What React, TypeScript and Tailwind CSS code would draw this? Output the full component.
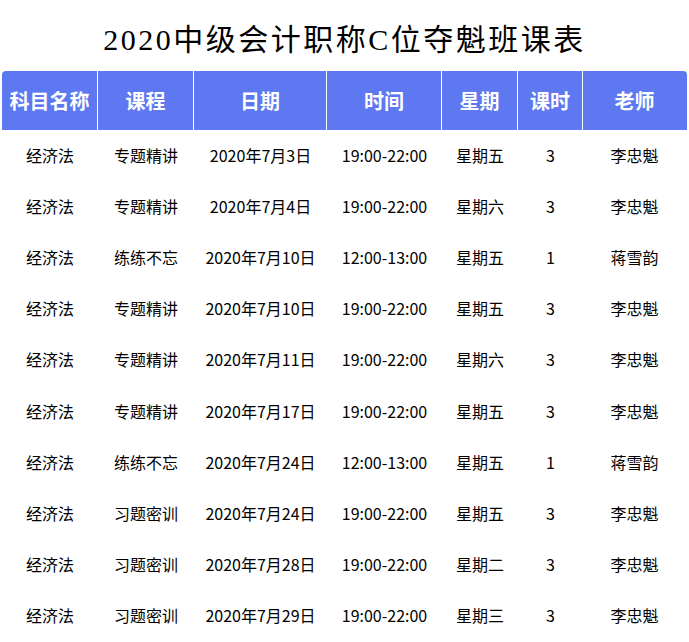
import React from "react";

const rows: string[][] = [
  ["经济法", "专题精讲", "2020年7月3日", "19:00-22:00", "星期五", "3", "李忠魁"],
  ["经济法", "专题精讲", "2020年7月4日", "19:00-22:00", "星期六", "3", "李忠魁"],
  ["经济法", "练练不忘", "2020年7月10日", "12:00-13:00", "星期五", "1", "蒋雪韵"],
  ["经济法", "专题精讲", "2020年7月10日", "19:00-22:00", "星期五", "3", "李忠魁"],
  ["经济法", "专题精讲", "2020年7月11日", "19:00-22:00", "星期六", "3", "李忠魁"],
  ["经济法", "专题精讲", "2020年7月17日", "19:00-22:00", "星期五", "3", "李忠魁"],
  ["经济法", "练练不忘", "2020年7月24日", "12:00-13:00", "星期五", "1", "蒋雪韵"],
  ["经济法", "习题密训", "2020年7月24日", "19:00-22:00", "星期五", "3", "李忠魁"],
  ["经济法", "习题密训", "2020年7月28日", "19:00-22:00", "星期二", "3", "李忠魁"],
  ["经济法", "习题密训", "2020年7月29日", "19:00-22:00", "星期三", "3", "李忠魁"],
];

const headers = ["科目名称", "课程", "日期", "时间", "星期", "课时", "老师"];

export default function App() {
  return (
    <div className="w-[689px] h-[642px] bg-white overflow-hidden">
      <div
        className="h-[71px] flex items-center justify-center pt-[8px] text-[30px] tracking-[2.5px] text-black"
        style={{ fontFamily: '"Liberation Serif", "Noto Sans CJK SC", serif' }}
      >
        2020中级会计职称C位夺魁班课表
      </div>
      <div className="mx-[2px]">
        <div
          className="grid grid-cols-[96px_96px_133px_115px_76px_65px_103px] h-[59px] bg-[#5d78f0] rounded-t-[4px] text-white text-[20px] font-bold"
          style={{ fontFamily: '"Noto Sans CJK SC", sans-serif' }}
        >
          {headers.map((h, i) => (
            <div
              key={h}
              className={
                "flex items-center justify-center " +
                (i < headers.length - 1 ? "border-r border-white" : "")
              }
            >
              {h}
            </div>
          ))}
        </div>
        <div style={{ fontFamily: '"Noto Sans CJK SC", sans-serif' }}>
          {rows.map((r, ri) => (
            <div
              key={ri}
              className="grid grid-cols-[96px_96px_133px_115px_76px_65px_103px] h-[51.1px] text-[16px] text-black"
            >
              {r.map((c, ci) => (
                <div key={ci} className="flex items-center justify-center pb-[1px]">
                  {c}
                </div>
              ))}
            </div>
          ))}
        </div>
      </div>
    </div>
  );
}
